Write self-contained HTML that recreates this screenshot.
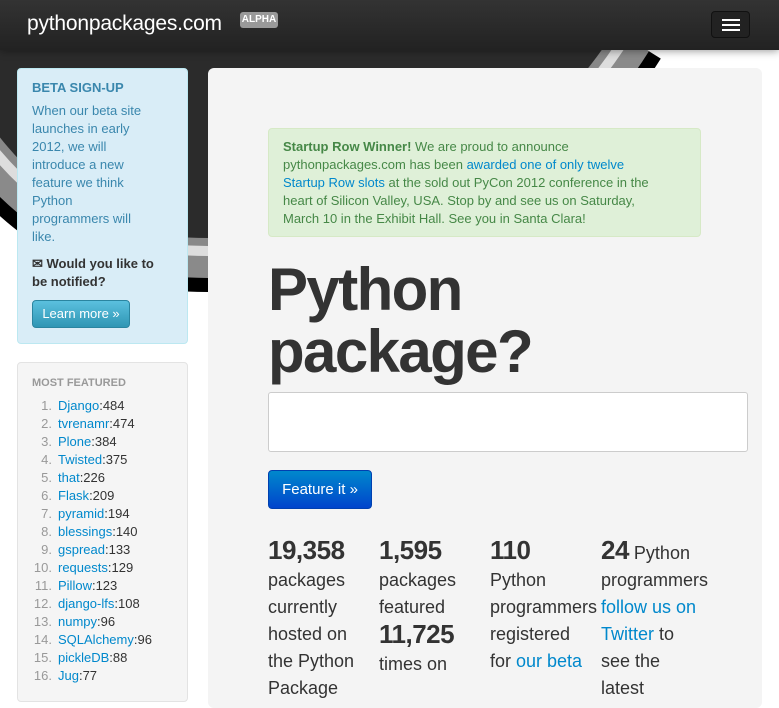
<!DOCTYPE html>
<html><head><meta charset="utf-8">
<style>
*{margin:0;padding:0;box-sizing:border-box}
body{width:779px;height:685px;overflow:hidden;background:#fff;font-family:"Liberation Sans",Helvetica,Arial,sans-serif;color:#333;position:relative}
#bg{position:absolute;left:0;top:0}
.nav{position:absolute;left:0;top:0;width:779px;height:50px;background:linear-gradient(#333,#222);box-shadow:0 1px 8px rgba(0,0,0,.4);z-index:2}
.brand{position:absolute;left:27px;top:12px;font-size:21px;color:#fff;letter-spacing:-0.2px}
.badge{position:absolute;left:240px;top:12px;width:38px;height:16px;background:#999;border-radius:3px;color:#fff;font-size:10px;font-weight:bold;text-align:center;line-height:16px}
.hb{position:absolute;left:711px;top:11px;width:39px;height:27px;background:#222;border:1px solid #111;border-radius:4px}
.hb i{position:absolute;left:10px;width:18px;height:2px;background:#fff}
.beta{position:absolute;left:17px;top:68px;width:171px;height:276px;background:#d9edf7;border:1px solid #bce8f1;border-radius:4px;padding:10px 40px 10px 14px;color:#3a87ad;font-size:13px;line-height:18px}
.beta h4{font-size:13px;font-weight:bold;margin-bottom:5px;white-space:nowrap}
.beta b{color:#333;display:block;margin-top:9px;margin-right:-16px}
.btn1{display:inline-block;margin-top:9px;width:98px;height:28px;background:linear-gradient(#5bc0de,#2f96b4);border:1px solid #2a85a0;border-radius:4px;color:#fff;font-size:13px;text-align:center;line-height:26px;white-space:nowrap}
.feat{position:absolute;left:17px;top:362px;width:171px;height:340px;background:#f5f5f5;border:1px solid #e3e3e3;border-radius:4px;padding:14px 14px}
.feat h5{font-size:11px;color:#999;font-weight:bold;margin-bottom:8px}
.feat ol{list-style:none;font-size:13px;line-height:18px}
.feat li span{display:inline-block;width:20px;text-align:right;color:#999;margin-right:6px}
a{color:#0088cc;text-decoration:none}
.main{position:absolute;left:208px;top:68px;width:554px;height:640px;background:#f4f4f4;border-radius:6px}
.alert{position:absolute;left:60px;top:60px;width:433px;height:109px;background:#dff0d8;border:1px solid #d6e9c6;border-radius:4px;color:#468847;font-size:13px;line-height:18px;padding:9px 42px 9px 14px}
h1{position:absolute;left:60px;top:191px;font-size:60px;line-height:62px;font-weight:bold;color:#333;letter-spacing:-1.6px}
.inp{position:absolute;left:60px;top:324px;width:480px;height:60px;background:#fff;border:1px solid #ccc;border-radius:3px}
.btn2{position:absolute;left:60px;top:402px;width:104px;height:39px;background:linear-gradient(#0088cc,#0044cc);border:1px solid #0040b0;border-radius:4px;color:#fff;font-size:15px;text-align:center;line-height:37px}
.col{position:absolute;top:469px;width:100px;font-size:18px;line-height:27px}
.col b{font-size:26px;letter-spacing:-0.5px}
</style></head><body>
<svg id="bg" width="779" height="400" viewBox="0 0 779 400">
<g fill="none">
<path d="M-20,110 C50,215 130,238 208,238 C400,238 540,150 615,30" stroke="#000" stroke-width="108"/>
<path d="M-20,110 C50,215 130,238 208,238 C400,238 540,150 615,30" stroke="#8a8a8a" stroke-width="80"/>
<path d="M-20,110 C50,215 130,238 208,238 C400,238 540,150 615,30" stroke="#ddd" stroke-width="36"/>
<path d="M-20,110 C50,215 130,238 208,238 C400,238 540,150 615,30" stroke="#888" stroke-width="16"/>
</g>
<path d="M-20,110 C50,215 130,238 208,238 C400,238 540,150 615,30 L-20,30 Z" fill="#2b2b2b"/>
</svg>
<div class="nav"><div class="brand">pythonpackages.com</div><div class="badge">ALPHA</div>
<div class="hb"><i style="top:7px"></i><i style="top:12px"></i><i style="top:17px"></i></div></div>
<div class="beta"><h4>BETA SIGN-UP</h4>When our beta site launches in early 2012, we will introduce a new feature we think Python programmers will like.<b>✉ Would you like to be notified?</b><span class="btn1">Learn more »</span></div>
<div class="feat"><h5>MOST FEATURED</h5><ol>
<li><span>1.</span><a>Django</a>:484</li><li><span>2.</span><a>tvrenamr</a>:474</li><li><span>3.</span><a>Plone</a>:384</li><li><span>4.</span><a>Twisted</a>:375</li><li><span>5.</span><a>that</a>:226</li><li><span>6.</span><a>Flask</a>:209</li><li><span>7.</span><a>pyramid</a>:194</li><li><span>8.</span><a>blessings</a>:140</li><li><span>9.</span><a>gspread</a>:133</li><li><span>10.</span><a>requests</a>:129</li><li><span>11.</span><a>Pillow</a>:123</li><li><span>12.</span><a>django-lfs</a>:108</li><li><span>13.</span><a>numpy</a>:96</li><li><span>14.</span><a>SQLAlchemy</a>:96</li><li><span>15.</span><a>pickleDB</a>:88</li><li><span>16.</span><a>Jug</a>:77</li></ol></div>
<div class="main">
<div class="alert"><b>Startup Row Winner!</b> We are proud to announce pythonpackages.com has been <a>awarded one of only twelve Startup Row slots</a> at the sold out PyCon 2012 conference in the heart of Silicon Valley, USA. Stop by and see us on Saturday, March 10 in the Exhibit Hall. See you in Santa Clara!</div>
<h1>Python<br>package?</h1>
<div class="inp"></div>
<div class="btn2">Feature it »</div>
<div class="col" style="left:60px"><b>19,358</b><br>packages currently hosted on the Python Package</div>
<div class="col" style="left:171px"><b>1,595</b><br>packages featured<br><b>11,725</b><br>times on</div>
<div class="col" style="left:282px;width:112px"><b>110</b><br>Python programmers registered<br>for <a>our beta</a></div>
<div class="col" style="left:393px;width:112px"><b>24</b> Python programmers <a>follow us on</a><br><a>Twitter</a> to<br>see the<br>latest</div>
</div>
</body></html>
